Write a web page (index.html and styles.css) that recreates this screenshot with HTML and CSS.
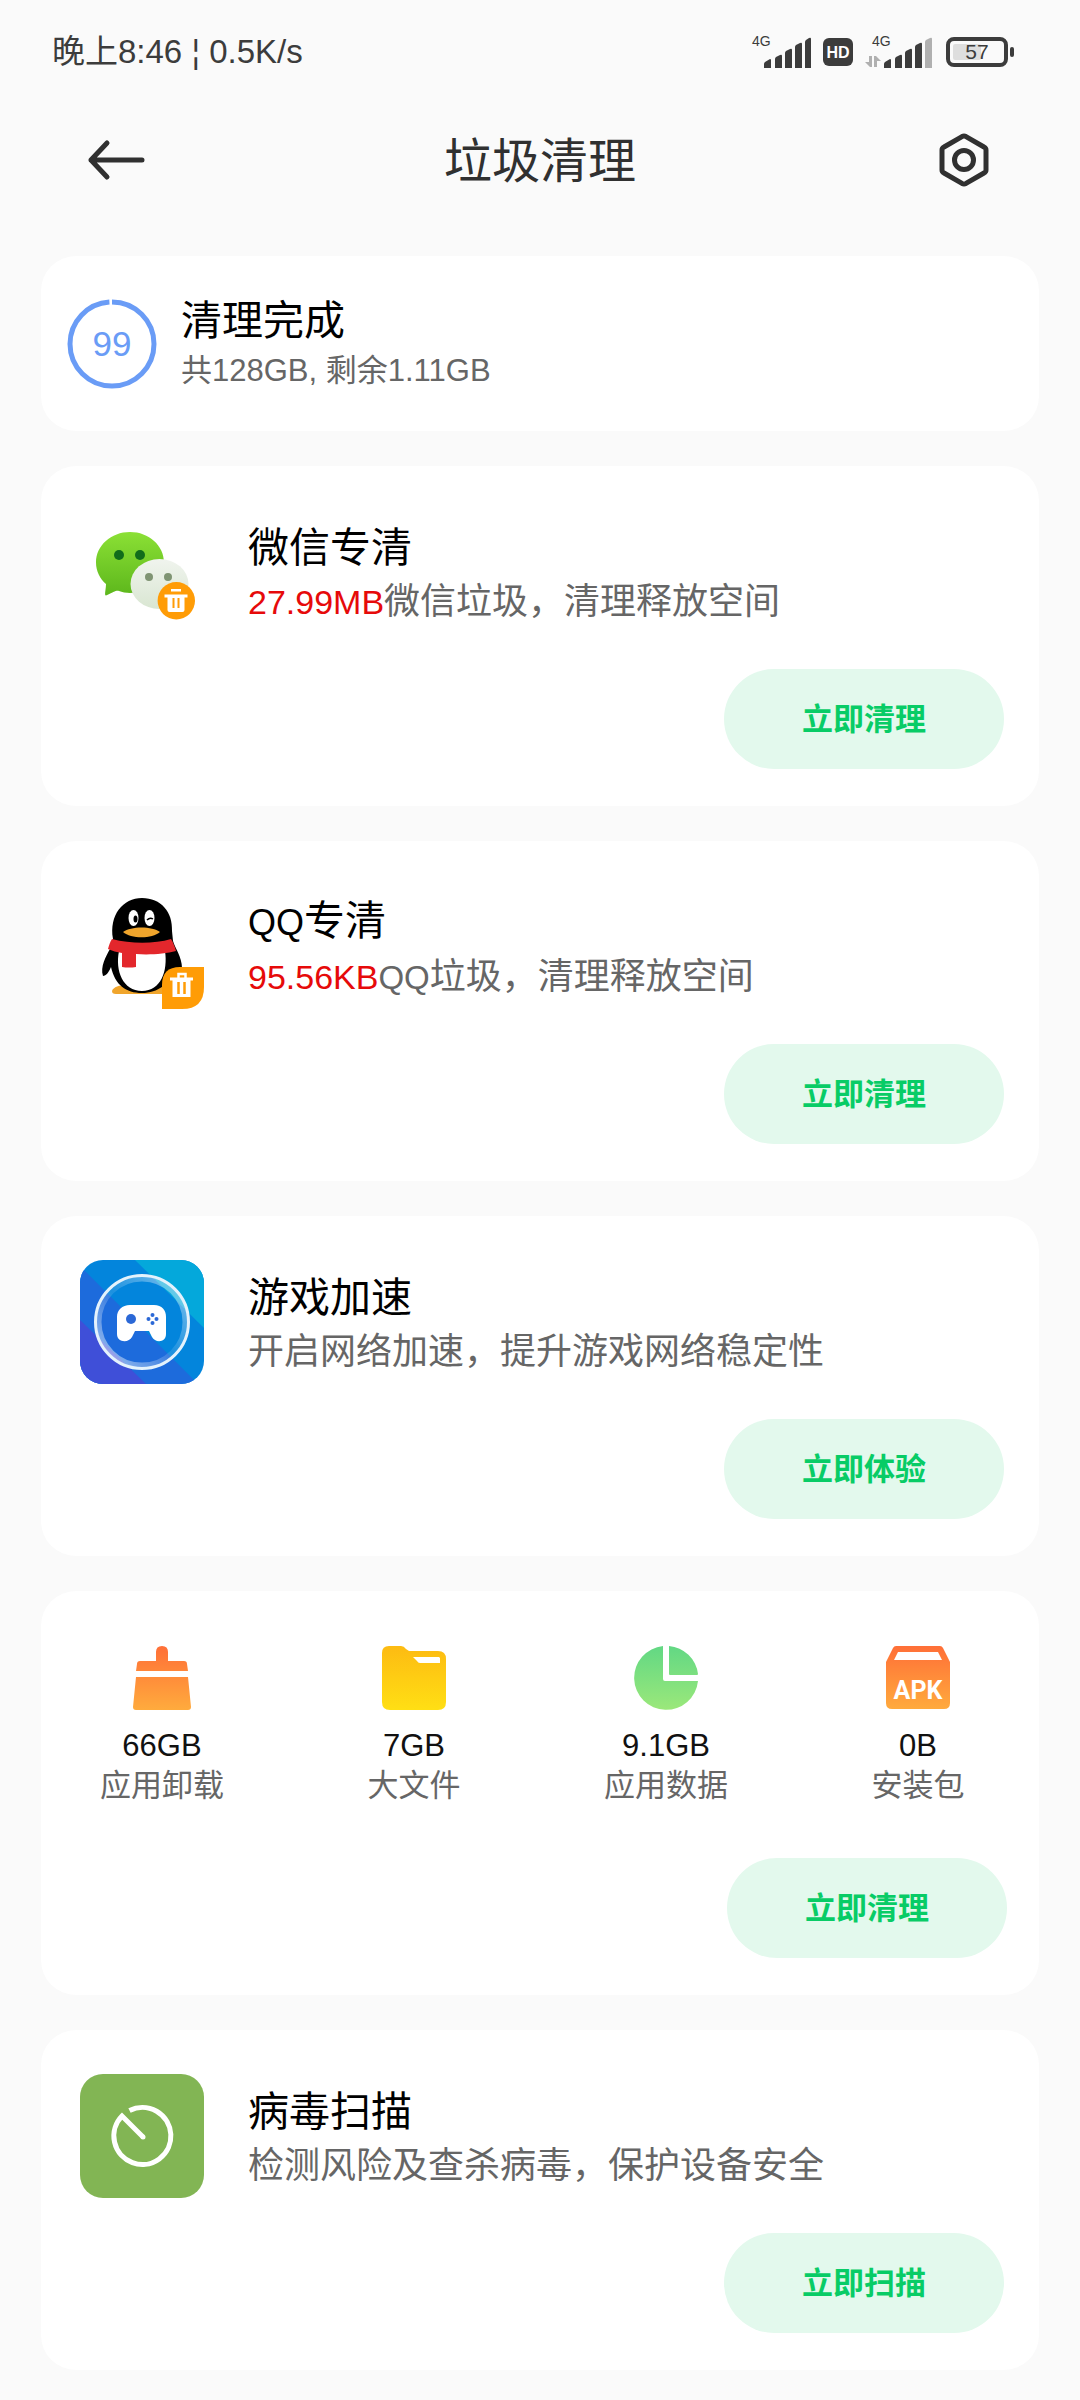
FILE: index.html
```html
<!DOCTYPE html>
<html lang="zh-CN">
<head>
<meta charset="utf-8">
<meta name="viewport" content="width=device-width, initial-scale=1">
<title>垃圾清理</title>
<link rel="stylesheet" href="styles.css">
</head>
<body>
<div class="status-bar">
  <span class="status-text">晚上8:46 ¦ 0.5K/s</span>
  <div class="status-icons">
    <svg width="60" height="40" viewBox="0 0 60 40" fill="#3c3c3c" aria-hidden="true">
      <text class="net-label" x="1" y="15">4G</text>
      <path d="M13 37v-4q0-1 1-2l5-3q1 0 1 1v8zM24 37V28q0-1 1-2l4-2q2-1 2 1v12zM34 37V22q0-1 1-2l4-2q2-1 2 1v18zM44 37V16q0-1 1-2l4-2q2-1 2 1v24zM54 37V11q0-1 1-2l3-2q2-1 2 1v29z"/>
    </svg>
    <svg width="30" height="40" viewBox="0 0 30 40" aria-hidden="true">
      <rect y="7" width="30" height="28" rx="6" fill="#3c3c3c"/>
      <text class="hd-label" x="15" y="27" text-anchor="middle">HD</text>
    </svg>
    <svg width="67" height="40" viewBox="0 0 67 40" fill="#3c3c3c" aria-hidden="true">
      <text class="net-label" x="7" y="15">4G</text>
      <path d="M4 25h3v11h-2L0 31h4zM9 25h2l5 5h-4v6H9z" fill="#b0b0b0"/>
      <path d="M19 37v-4q0-1 1-2l5-3q1 0 1 1v8zM30 37V28q0-1 1-2l4-2q2-1 2 1v12zM40 37V22q0-1 1-2l4-2q2-1 2 1v18zM50 37V16q0-1 1-2l4-2q2-1 2 1v24z"/>
      <path d="M60 37V11q0-1 1-2l4-2q2-1 2 1v29z" fill="#b0b0b0"/>
    </svg>
    <svg width="70" height="40" viewBox="0 0 70 40" aria-hidden="true">
      <rect x="4" y="8" width="58" height="26" rx="6" fill="none" stroke="#3c3c3c" stroke-width="4"/>
      <rect x="9" y="13" width="28" height="16" rx="2" fill="#dedede"/>
      <rect x="66" y="16" width="4" height="10" rx="2" fill="#3c3c3c"/>
      <text class="battery-label" x="33" y="28" text-anchor="middle">57</text>
    </svg>
  </div>
</div>

<header class="header">
  <button class="icon-button" type="button" aria-label="返回">
    <svg width="58" height="58" viewBox="0 0 58 58" fill="none" stroke="#303030" stroke-width="5" stroke-linecap="round" stroke-linejoin="round"><path d="M55 29H4M20 12L4 29l16 17"/></svg>
  </button>
  <h1 class="page-title">垃圾清理</h1>
  <button class="icon-button" type="button" aria-label="设置">
    <svg width="58" height="58" viewBox="0 0 58 58" fill="none" stroke="#303030" stroke-width="5" stroke-linejoin="round"><path d="M27 5.600q2-1 4 0l18 10.400q2 1 2 3v20q0 2-2 3L31 52.400q-2 1-4 0L9 42q-2-1-2-3V19q0-2 2-3z"/><circle cx="29" cy="29" r="9.500"/></svg>
  </button>
</header>

<main class="cards">
  <section class="card summary">
    <svg class="ring" width="90" height="90" viewBox="0 0 90 90" aria-hidden="true">
      <circle cx="45" cy="45" r="42" fill="none" stroke="#6a9cf6" stroke-width="5" pathLength="100" stroke-dasharray="99 1" transform="rotate(-90 45 45)"/>
      <text class="score" x="45" y="57" text-anchor="middle">99</text>
    </svg>
    <div class="text">
      <h2 class="summary-title">清理完成</h2>
      <p class="summary-note">共128GB, 剩余1.11GB</p>
    </div>
  </section>

  <section class="card">
    <div class="feature">
      <svg width="124" height="124" viewBox="0 0 124 124" aria-hidden="true">
        <defs>
          <linearGradient id="wx" x2="0" y2="1"><stop stop-color="#8be035"/><stop offset="1" stop-color="#5db71c"/></linearGradient>
          <linearGradient id="wx2" x2="0" y2="1"><stop stop-color="#f0f4ee"/><stop offset="1" stop-color="#d9e6d2"/></linearGradient>
        </defs>
        <path d="M50 22c19 0 34 13.500 34 30.500S69 83 50 83c-4 0-8-1-11-2-3-1-5 1-13 4.500-2 0 0-6 0-11.500-6-5-10-13-10-21.500C16 35.500 31 22 50 22z" fill="url(#wx)"/>
        <circle cx="39" cy="45" r="5" fill="#116c1b"/><circle cx="60" cy="45" r="5" fill="#116c1b"/>
        <ellipse cx="79.500" cy="74" rx="29" ry="25" fill="url(#wx2)"/>
        <circle cx="69" cy="67" r="4" fill="#7f9473"/><circle cx="88" cy="67" r="4" fill="#7f9473"/>
        <circle cx="96.300" cy="90.700" r="18.700" fill="#ff9c06"/>
        <path d="M91 79h10v2.500H91zM84.500 84.500h23v3h-3V100q0 2-2 2h-13q-2 0-2-2V87.500h-3z" fill="#fff"/>
        <path d="M93.500 88v10M98.500 88v10" stroke="#ff9c06" stroke-width="2"/>
      </svg>
      <div class="text">
        <h2 class="feature-title">微信专清</h2>
        <p class="feature-note"><strong class="size">27.99MB</strong>微信垃圾，清理释放空间</p>
      </div>
    </div>
    <button class="action" type="button">立即清理</button>
  </section>

  <section class="card">
    <div class="feature">
      <svg width="124" height="124" viewBox="0 0 124 124" aria-hidden="true">
        <path d="M32 106c1-4 8-6 14-6h32c8 0 13 5 13 9H36c-3 0-4-1-4-3z" fill="#f0a52c"/>
        <path d="M62 13c19 0 31 14 30 33l1 10c2 7 9 16 9 27-1 8-6 5-9 1-3 15-15 24-31 24S35 100 31 82c-2 5-5 9-8 9-3-9 3-20 7-27l3-10C29 30 43 13 62 13z"/>
        <path d="M39 66c15 4 32 4 46 0 3 20-4 40-23 40S35 86 39 66z" fill="#fff"/>
        <path d="M32 54c19 5 42 5 59 0 2 3 4 8 5 12-11 3-27 4-40 3v13q-7 1-14 0V68c-5-1-10-2-14-4 1-4 2-7 4-10z" fill="#e3272c"/>
        <ellipse cx="53.500" cy="33" rx="5" ry="8" fill="#fff"/><ellipse cx="69.500" cy="33" rx="5" ry="8" fill="#fff"/>
        <ellipse cx="55.500" cy="34" rx="2" ry="3.500"/>
        <path d="M67 35q3-3 6-1" fill="none" stroke="#000" stroke-width="1.500"/>
        <path d="M43 47c8-6 29-6 37 0-8 7-29 7-37 0z" fill="#f0a52c"/>
        <path d="M100 82h24v20q0 22-22 22H82v-24q0-18 18-18z" fill="#ff9c06"/>
        <path d="M98.500 93v-4h7v4" fill="none" stroke="#fff" stroke-width="2.500"/>
        <path d="M90 92.500h23v3h-2.500V112H92.500V95.500H90z" fill="#fff"/>
        <path d="M98.500 97v12M104.500 97v12" stroke="#ff9c06" stroke-width="2.500"/>
      </svg>
      <div class="text">
        <h2 class="feature-title"><span class="app-name">QQ</span>专清</h2>
        <p class="feature-note"><strong class="size">95.56KB</strong><span class="app-name">QQ</span>垃圾，清理释放空间</p>
      </div>
    </div>
    <button class="action" type="button">立即清理</button>
  </section>

  <section class="card">
    <div class="feature">
      <svg width="124" height="124" viewBox="0 0 124 124" aria-hidden="true">
        <defs>
          <clipPath id="tile"><rect width="124" height="124" rx="23"/></clipPath>
          <linearGradient id="glass" x1="0" y1="1" x2="1" y2="0"><stop stop-color="#fff" stop-opacity=".6"/><stop offset=".5" stop-color="#fff" stop-opacity=".1"/><stop offset="1" stop-color="#fff" stop-opacity=".5"/></linearGradient>
        </defs>
        <g clip-path="url(#tile)">
          <path d="M0 0h124v124H0z" fill="#0385dc"/>
          <path d="M55 0h69v68z" fill="#04a8db"/>
          <path d="M0 6l118 118H0z" fill="#1d6bdc"/>
          <path d="M0 60l66 64H0z" fill="#3f4fd8"/>
        </g>
        <circle cx="62" cy="62" r="43" fill="none" stroke="url(#glass)" stroke-width="5"/>
        <circle cx="62" cy="62" r="46.500" fill="none" stroke="#e4f2fc" stroke-width="3"/>
        <path d="M50 45h24c8 0 12 5 12 12v17c0 9-11 9-14 3l-3-6H55l-3 6c-3 6-15 6-15-3V57c0-7 5-12 13-12z" fill="#fff"/>
        <circle cx="51" cy="59" r="5" fill="#2b68d6"/>
        <g fill="#2b68d6"><circle cx="72.500" cy="55" r="2"/><circle cx="72.500" cy="63" r="2"/><circle cx="68.500" cy="59" r="2"/><circle cx="76.500" cy="59" r="2"/></g>
      </svg>
      <div class="text">
        <h2 class="feature-title">游戏加速</h2>
        <p class="feature-note">开启网络加速，提升游戏网络稳定性</p>
      </div>
    </div>
    <button class="action" type="button">立即体验</button>
  </section>

  <section class="card storage">
    <ul class="stats">
      <li class="stat">
        <svg width="64" height="64" viewBox="0 0 64 64" aria-hidden="true">
          <defs><linearGradient id="orange" gradientUnits="userSpaceOnUse" x1="0" y1="0" x2="0" y2="64"><stop stop-color="#ff6f37"/><stop offset="1" stop-color="#ffab3d"/></linearGradient></defs>
          <path d="M6 25l1-7q0-3 3-3h16V6q0-6 6-6t6 6v9h16q3 0 3 3l1 7zM6 31h52l3 30q0 3-3 3H6q-3 0-3-3z" fill="url(#orange)"/>
        </svg>
        <span class="stat-value">66GB</span>
        <span class="stat-label">应用卸载</span>
      </li>
      <li class="stat">
        <svg width="64" height="64" viewBox="0 0 64 64" aria-hidden="true">
          <defs><linearGradient id="yellow" x2="0" y2="1"><stop stop-color="#fdbb12"/><stop offset="1" stop-color="#ffdf14"/></linearGradient></defs>
          <path d="M7 0h12q3 0 5 3l3 2h29q8 0 8 8v43q0 8-8 8H8q-8 0-8-8V7q0-7 7-7z" fill="url(#yellow)"/>
          <path d="M31 11h26l1 1v5H38q-2 0-3-2z" fill="#fff"/>
        </svg>
        <span class="stat-value">7GB</span>
        <span class="stat-label">大文件</span>
      </li>
      <li class="stat">
        <svg width="64" height="64" viewBox="0 0 64 64" aria-hidden="true">
          <defs><linearGradient id="green" gradientUnits="userSpaceOnUse" x1="0" y1="0" x2="0" y2="64"><stop stop-color="#62d884"/><stop offset="1" stop-color="#9be87a"/></linearGradient></defs>
          <path d="M29 0v33q0 2 2 2h33A32 32 0 1 1 29 0zM35 0a32 32 0 0 1 29 28q0 1-1 1H36q-1 0-1-1z" fill="url(#green)"/>
        </svg>
        <span class="stat-value">9.1GB</span>
        <span class="stat-label">应用数据</span>
      </li>
      <li class="stat">
        <svg width="64" height="64" viewBox="0 0 64 64" aria-hidden="true">
          <path d="M10 0h44q2 0 3 2l7 14v41q0 6-6 6H6q-6 0-6-6V16L7 2q1-2 3-2z" fill="url(#orange)"/>
          <path d="M12 6h40l4 8H8z" fill="#fff"/>
          <text class="apk-label" x="32" y="53" text-anchor="middle">APK</text>
        </svg>
        <span class="stat-value">0B</span>
        <span class="stat-label">安装包</span>
      </li>
    </ul>
    <button class="action" type="button">立即清理</button>
  </section>

  <section class="card">
    <div class="feature">
      <svg width="124" height="124" viewBox="0 0 124 124" aria-hidden="true">
        <rect width="124" height="124" rx="23" fill="#82b554"/>
        <path d="M49.500 36.500A28.500 28.500 0 1 1 42 42l21 21" fill="none" stroke="#fff" stroke-width="5"/>
        <circle cx="63" cy="63" r="2.500" fill="#fff"/>
      </svg>
      <div class="text">
        <h2 class="feature-title">病毒扫描</h2>
        <p class="feature-note">检测风险及查杀病毒，保护设备安全</p>
      </div>
    </div>
    <button class="action" type="button">立即扫描</button>
  </section>
</main>
</body>
</html>
```
FILE: styles.css
```css
* {
  box-sizing: border-box;
}

body {
  margin: 0;
  background: #fafafa;
  color: #000;
  font-family: "Liberation Sans", "Noto Sans CJK SC", sans-serif;
}

h1,
h2,
p,
ul {
  margin: 0;
  padding: 0;
  font-weight: 400;
}

svg {
  display: block;
  flex: none;
}

button {
  border: 0;
  padding: 0;
  background: none;
  font-family: inherit;
  cursor: pointer;
}

.status-bar {
  display: flex;
  align-items: center;
  justify-content: space-between;
  height: 102px;
  padding: 0 66px 0 52px;
}

.status-text {
  padding-bottom: 4px;
  color: #3c3c3c;
  font-size: 33px;
}

.status-icons {
  display: flex;
  gap: 12px;
}

.net-label {
  font-size: 14px;
}

.hd-label {
  fill: #fff;
  font-size: 16px;
  font-weight: 700;
}

.battery-label {
  fill: #3c3c3c;
  font-size: 21px;
}

.header {
  display: flex;
  align-items: center;
  justify-content: space-between;
  height: 116px;
  padding: 0 87px;
}

.page-title {
  padding-bottom: 6px;
  color: #303030;
  font-size: 48px;
}

.cards {
  display: flex;
  flex-direction: column;
  gap: 35px;
  padding: 38px 41px 30px;
}

.card {
  display: flex;
  flex-direction: column;
  padding: 44px 35px 37px 39px;
  border-radius: 35px;
  background: #fff;
}

.summary {
  flex-direction: row;
  align-items: center;
  gap: 24px;
  padding: 35px 26px;
}

.text {
  padding-top: 5px;
}

.score {
  fill: #6a9cf6;
  font-size: 35px;
}

.summary-title {
  font-size: 41px;
  line-height: 50px;
}

.summary-note {
  color: #666;
  font-size: 31px;
  line-height: 50px;
}

.feature {
  display: flex;
  align-items: center;
  gap: 44px;
}

.feature-title {
  font-size: 41px;
  line-height: 54px;
}

.feature-note {
  color: #666;
  font-size: 36px;
  line-height: 54px;
}

.feature-title .app-name {
  font-size: 36px;
}

.feature-note .app-name {
  font-size: 33px;
}

.size {
  color: #e60a0a;
  font-size: 34px;
  font-weight: 400;
}

.action {
  align-self: flex-end;
  width: 280px;
  height: 100px;
  margin-top: 35px;
  padding-bottom: 6px;
  border-radius: 50px;
  background: #e3f9ed;
  color: #08cc66;
  font-size: 31px;
  font-weight: 700;
}

.storage {
  padding: 55px 32px 37px;
}

.storage .action {
  margin-top: 52px;
}

.stats {
  display: flex;
  justify-content: space-between;
  padding: 0 27px;
  list-style: none;
}

.stat {
  display: flex;
  flex-direction: column;
  align-items: center;
  width: 124px;
  font-size: 31px;
  line-height: 40px;
}

.stat-value {
  margin-top: 16px;
  color: #111;
}

.stat-label {
  color: #666;
}

.apk-label {
  fill: #fff;
  font-family: Roboto, "Liberation Sans", sans-serif;
  font-size: 25px;
  font-weight: 700;
}
```
